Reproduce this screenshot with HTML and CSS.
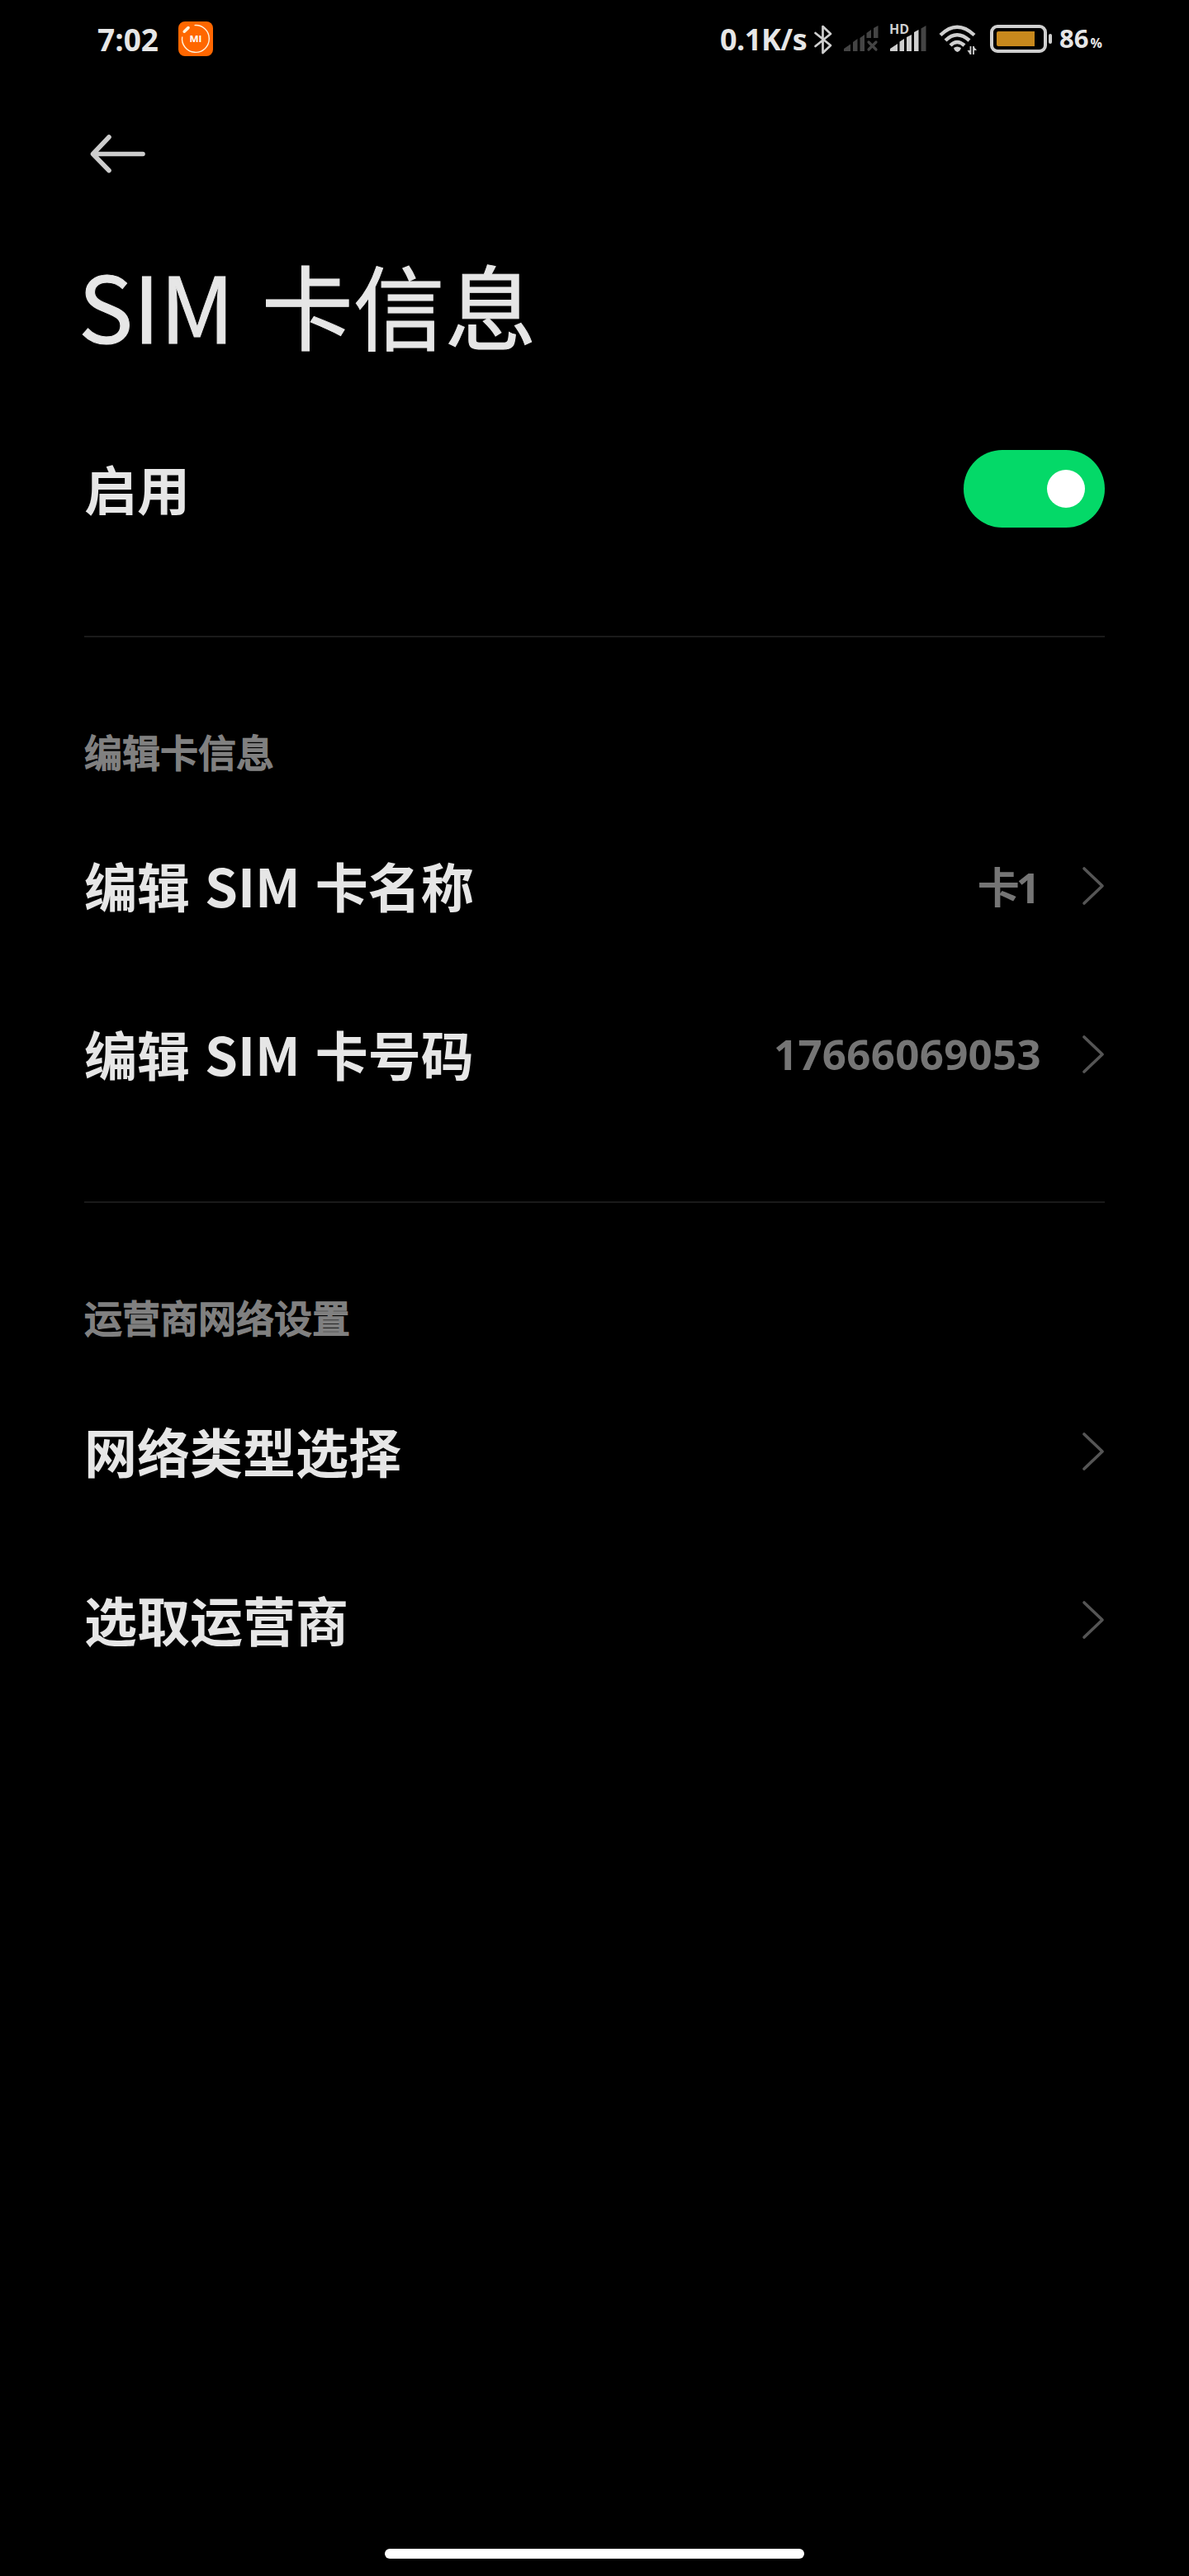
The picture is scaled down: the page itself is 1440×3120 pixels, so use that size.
FILE: index.html
```html
<!DOCTYPE html>
<html lang="zh-CN">
<head>
    <meta charset="UTF-8">
    <meta name="viewport" content="width=device-width, initial-scale=1.0">
    <title>SIM 卡信息</title>
    <link rel="stylesheet" href="styles.css">
</head>
<body>

    <div class="status-bar">
        <span class="time">7:02</span>
        <svg class="app-icon" width="42" height="42" viewBox="0 0 42 42">
            <rect width="42" height="42" rx="8" fill="#ff6700"/>
            <path d="M19.5 4.6A16.4 16.4 0 1 1 4.7 18.5" fill="none" stroke="#fff3dc" stroke-width="1.4"/>
            <path d="M7.2 12.2L12 7.6" stroke="#fff3dc" stroke-width="3.6" stroke-linecap="round"/>
            <text x="21" y="25" class="app-mark" textLength="15" lengthAdjust="spacingAndGlyphs">MI</text>
        </svg>

        <div class="status-right">
            <span class="speed">0.1K/s</span>
            <svg class="bluetooth" width="24" height="38" viewBox="0 0 24 38" fill="none" stroke="#cfcfcf" stroke-width="2.7" stroke-linejoin="round" stroke-linecap="round">
                <path d="M2.5 11L21 26L11.5 35V3L21 12L2.5 27"/>
            </svg>
            <svg class="signal" width="43" height="32" viewBox="0 0 43 32" fill="#444">
                <path d="M1 31V28L9 22.500V31ZM12 31V20L17.500 16V31ZM20.500 31V15L26 11V31ZM28.500 15V9L34 5V15ZM37 15V3L42.500 0V15Z"/>
                <path d="M31 20L40 29M40 20L31 29" stroke="#444" stroke-width="3.200" stroke-linecap="round"/>
            </svg>
            <div class="signal-hd">
                <span class="hd">HD</span>
                <svg width="44" height="32" viewBox="0 0 44 32" fill="#cfcfcf">
                    <path d="M0 31V28L9 22V31ZM11.500 31V19.500L17 16V31ZM20 31V14L26 11V31ZM29 31V8L34.500 5V31Z"/>
                    <path d="M37.500 31V3.500L43.500 0V31Z" fill="#444"/>
                </svg>
            </div>
            <svg class="wifi" width="46" height="37" viewBox="0 0 46 37" fill="none" stroke="#cfcfcf" stroke-width="4.4">
                <path d="M2 12.500Q22 -7 43 12.500"/>
                <path d="M8 19Q22 5.500 37 19"/>
                <path d="M14 25Q22 17 31 25"/>
                <path d="M18 28Q22 25 27 28Q26 32 22.500 33Q19 32 18 28Z" fill="#cfcfcf" stroke="none"/>
                <path d="M38.500 26V36M42 26V36" stroke-width="1.800"/>
                <path d="M34.500 31H38V36ZM46 31H42V26Z" fill="#cfcfcf" stroke="none"/>
            </svg>
            <div class="battery"><div class="battery-level"></div></div>
            <div class="battery-tip"></div>
            <span class="percent">86<small>%</small></span>
        </div>
    </div>

    <div class="header">
        <svg class="back" width="68" height="48" viewBox="0 0 68 48" fill="none" stroke="#cdcdcd" stroke-width="5.6" stroke-linecap="round" stroke-linejoin="round">
            <path d="M23 4L3.500 24.500L23 44.500M5 24.500H64"/>
        </svg>
        <h1>SIM 卡信息</h1>
    </div>

    <div class="section">
        <div class="row">
            <span class="label">启用</span>
            <div class="switch"><div class="knob"></div></div>
        </div>
    </div>

    <div class="section">
        <h2>编辑卡信息</h2>
        <div class="row">
            <span class="label">编辑 SIM 卡名称</span>
            <span class="value card-name">卡1</span>
            <svg class="chevron" width="28" height="48" viewBox="0 0 28 48"><path d="M3 3L25 24L3 45"/></svg>
        </div>
        <div class="row">
            <span class="label">编辑 SIM 卡号码</span>
            <span class="value">17666069053</span>
            <svg class="chevron" width="28" height="48" viewBox="0 0 28 48"><path d="M3 3L25 24L3 45"/></svg>
        </div>
    </div>

    <div class="section last">
        <h2>运营商网络设置</h2>
        <div class="row">
            <span class="label">网络类型选择</span>
            <svg class="chevron" width="28" height="48" viewBox="0 0 28 48"><path d="M3 3L25 24L3 45"/></svg>
        </div>
        <div class="row">
            <span class="label">选取运营商</span>
            <svg class="chevron" width="28" height="48" viewBox="0 0 28 48"><path d="M3 3L25 24L3 45"/></svg>
        </div>
    </div>

    <div class="home-bar"></div>

</body>
</html>
```
FILE: styles.css
```css
* {
    box-sizing: border-box;
}
body {
    margin: 0;
    height: 3120px;
    display: flex;
    flex-direction: column;
    background-color: #000;
    color: #e6e6e6;
    font-family: "Noto Sans CJK SC", sans-serif;
}
svg {
    display: block;
    flex: none;
}

/* status bar */
.status-bar {
    height: 96px;
    padding: 0 105px 0 118px;
    display: flex;
    align-items: center;
    font-family: "Open Sans", sans-serif;
    font-weight: bold;
    white-space: nowrap;
}
.time {
    width: 98px;
    font-size: 37px;
    line-height: 96px;
}
.app-icon {
    margin-bottom: 2px;
}
.app-mark {
    font: bold 11px "Open Sans", sans-serif;
    fill: #fff;
    text-anchor: middle;
}
.status-right {
    margin-left: auto;
    height: 96px;
    display: flex;
    align-items: center;
}
.speed {
    width: 113px;
    padding-bottom: 2px;
    font-size: 36px;
    letter-spacing: -0.5px;
}
.bluetooth {
    margin-right: 12px;
}
.signal {
    margin: 0 14px 3px 0;
}
.signal-hd {
    position: relative;
    margin: 0 15px 3px 0;
}
.hd {
    position: absolute;
    left: -1px;
    top: -6px;
    font-size: 16px;
    line-height: 20px;
    color: #cfcfcf;
}
.wifi {
    margin-right: 16px;
}
.battery {
    width: 69px;
    height: 34px;
    padding: 4px;
    border: 4px solid #cfcfcf;
    border-radius: 9px;
    margin-bottom: 2px;
}
.battery-level {
    width: 46px;
    height: 18px;
    border-radius: 2px 0 0 2px;
    background-color: #c8891d;
}
.battery-tip {
    width: 4px;
    height: 12px;
    margin: 0 9px 2px 2px;
    border-radius: 2px;
    background-color: #cfcfcf;
}
.percent {
    width: 52px;
    font-size: 31px;
    padding-bottom: 4px;
}
.percent small {
    font-size: 16px;
    margin-left: 2px;
}

/* title */
.header {
    height: 394px;
    padding: 66px 98px 0;
}
.back {
    margin-left: 11px;
}
h1 {
    margin: 78px 0 0 -3px;
    font-size: 111px;
    line-height: 160px;
    font-weight: 400;
    word-spacing: 8px;
    -webkit-text-stroke: 1px #e6e6e6;
}

/* settings list */
.section {
    margin: 0 102px;
    padding-bottom: 76px;
    border-bottom: 2px solid #1a1a1a;
}
.last {
    border-bottom: none;
}
h2 {
    margin: 0;
    height: 199px;
    padding-top: 103px;
    font-size: 46px;
    line-height: 68px;
    font-weight: 500;
    color: #808080;
    -webkit-text-stroke: 1.5px #808080;
}
.row {
    height: 204px;
    display: flex;
    align-items: center;
}
.label {
    flex: 1;
    padding-bottom: 4px;
    font-size: 64px;
    font-weight: bold;
    word-spacing: 3.5px;
}
.value {
    padding-bottom: 2px;
    font-family: "Open Sans", "Noto Sans CJK SC", sans-serif;
    font-size: 51px;
    font-weight: 700;
    letter-spacing: 0.3px;
    color: #757575;
    margin-right: 49px;
}
.card-name {
    letter-spacing: -4px;
    margin-right: 54px;
}
.chevron path {
    fill: none;
    stroke: #555;
    stroke-width: 3.6;
    stroke-linecap: round;
    stroke-linejoin: round;
}
.switch {
    width: 171px;
    height: 94px;
    padding: 24px;
    border-radius: 47px;
    background-color: #04d968;
    display: flex;
    justify-content: flex-end;
}
.knob {
    width: 46px;
    height: 46px;
    border-radius: 50%;
    background-color: #fff;
}

.home-bar {
    width: 508px;
    height: 12px;
    margin: auto auto 21px;
    border-radius: 6px;
    background-color: #fff;
}
```
